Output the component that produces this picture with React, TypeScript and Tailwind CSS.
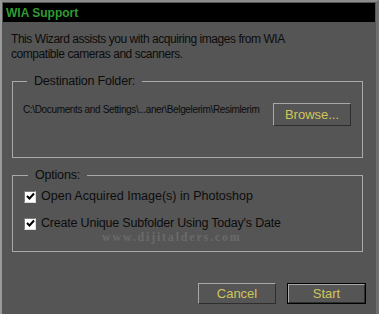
import React from "react";

function Check() {
  return (
    <span className="flex h-[12px] w-[12px] shrink-0 items-center justify-center border border-t-[#7a7a7a] border-l-[#7a7a7a] border-r-[#dcdcdc] border-b-[#dcdcdc] bg-white">
      <svg width="9" height="9" viewBox="0 0 9 9">
        <path d="M1 4 L3.5 6.5 L8 1.5" stroke="#000" strokeWidth="2" fill="none" />
      </svg>
    </span>
  );
}

export default function App() {
  const font = { fontFamily: '"Liberation Sans", Arial, sans-serif' };
  return (
    <div
      className="relative flex h-[314px] w-[379px] flex-col overflow-hidden border-t-2 border-l-2 border-r-[3px] border-t-[#8c8c8c] border-l-[#9a9a9a] border-r-[#6e6e6e] bg-[#555555] text-[#0c0c0c]"
      style={font}
    >
      <div className="mx-[1px] mt-[1px] flex h-[19px] items-center bg-black pl-[3px]">
        <span className="text-[12px] font-bold text-[#2f9b2f]">WIA Support</span>
      </div>

      <div className="mt-[10px] pl-[9px] text-[12px] leading-[15px] tracking-[-0.45px]">
        <div>This Wizard assists you with acquiring images from WIA</div>
        <div>compatible cameras and scanners.</div>
      </div>

      <fieldset className="ml-[10px] mt-[12px] h-[84px] w-[351px] border border-[#a9a9a9] pl-[10px] pr-[11px]">
        <legend className="ml-[4px] px-[7px] text-[12.5px] leading-[15px] tracking-[-0.2px]">Destination Folder:</legend>
        <div className="flex items-start justify-between">
          <span className="mt-[13px] whitespace-nowrap text-[10px] tracking-[-0.35px]">
            C:\Documents and Settings\...aner\Belgelerim\Resimlerim
          </span>
          <button className="mt-[14px] flex h-[23px] w-[78px] shrink-0 items-center justify-center border border-t-[#a8a8a8] border-l-[#a8a8a8] border-r-[#2e2e2e] border-b-[#2e2e2e] text-[13px] text-[#cfc65a]">
            Browse...
          </button>
        </div>
      </fieldset>

      <fieldset className="ml-[10px] mt-[10px] h-[84px] w-[351px] border border-[#a9a9a9] pl-[11px]">
        <legend className="ml-[4px] px-[7px] text-[12.5px] leading-[15px] tracking-[-0.2px]">Options:</legend>
        <div className="mt-[7px] flex flex-col gap-[14px]">
          <label className="flex items-center gap-[5px] text-[12.5px] leading-[13px]">
            <Check />
            <span>Open Acquired Image(s) in Photoshop</span>
          </label>
          <label className="flex items-center gap-[5px] text-[12.5px] leading-[13px] tracking-[-0.2px]">
            <Check />
            <span>Create Unique Subfolder Using Today's Date</span>
          </label>
        </div>
      </fieldset>

      <div
        className="pointer-events-none absolute left-[100px] top-[229px] text-[12px] font-bold leading-[12px] tracking-[1.8px] text-[#6a6a6a]"
        style={{ fontFamily: '"Liberation Serif", serif' }}
      >
        www.dijitalders.com
      </div>

      <div className="mt-auto mb-[10px] flex justify-end gap-[11px] pr-[10px]">
        <button className="flex h-[21px] w-[78px] items-center justify-center border border-t-[#a8a8a8] border-l-[#a8a8a8] border-r-[#2e2e2e] border-b-[#2e2e2e] text-[13px] text-[#cfc65a]">
          Cancel
        </button>
        <button className="flex h-[21px] w-[79px] items-center justify-center border border-black text-[13px] text-[#cfc65a]">
          <span className="flex h-full w-full items-center justify-center border border-t-[#a8a8a8] border-l-[#a8a8a8] border-r-[#2e2e2e] border-b-[#2e2e2e]">
            Start
          </span>
        </button>
      </div>
    </div>
  );
}
